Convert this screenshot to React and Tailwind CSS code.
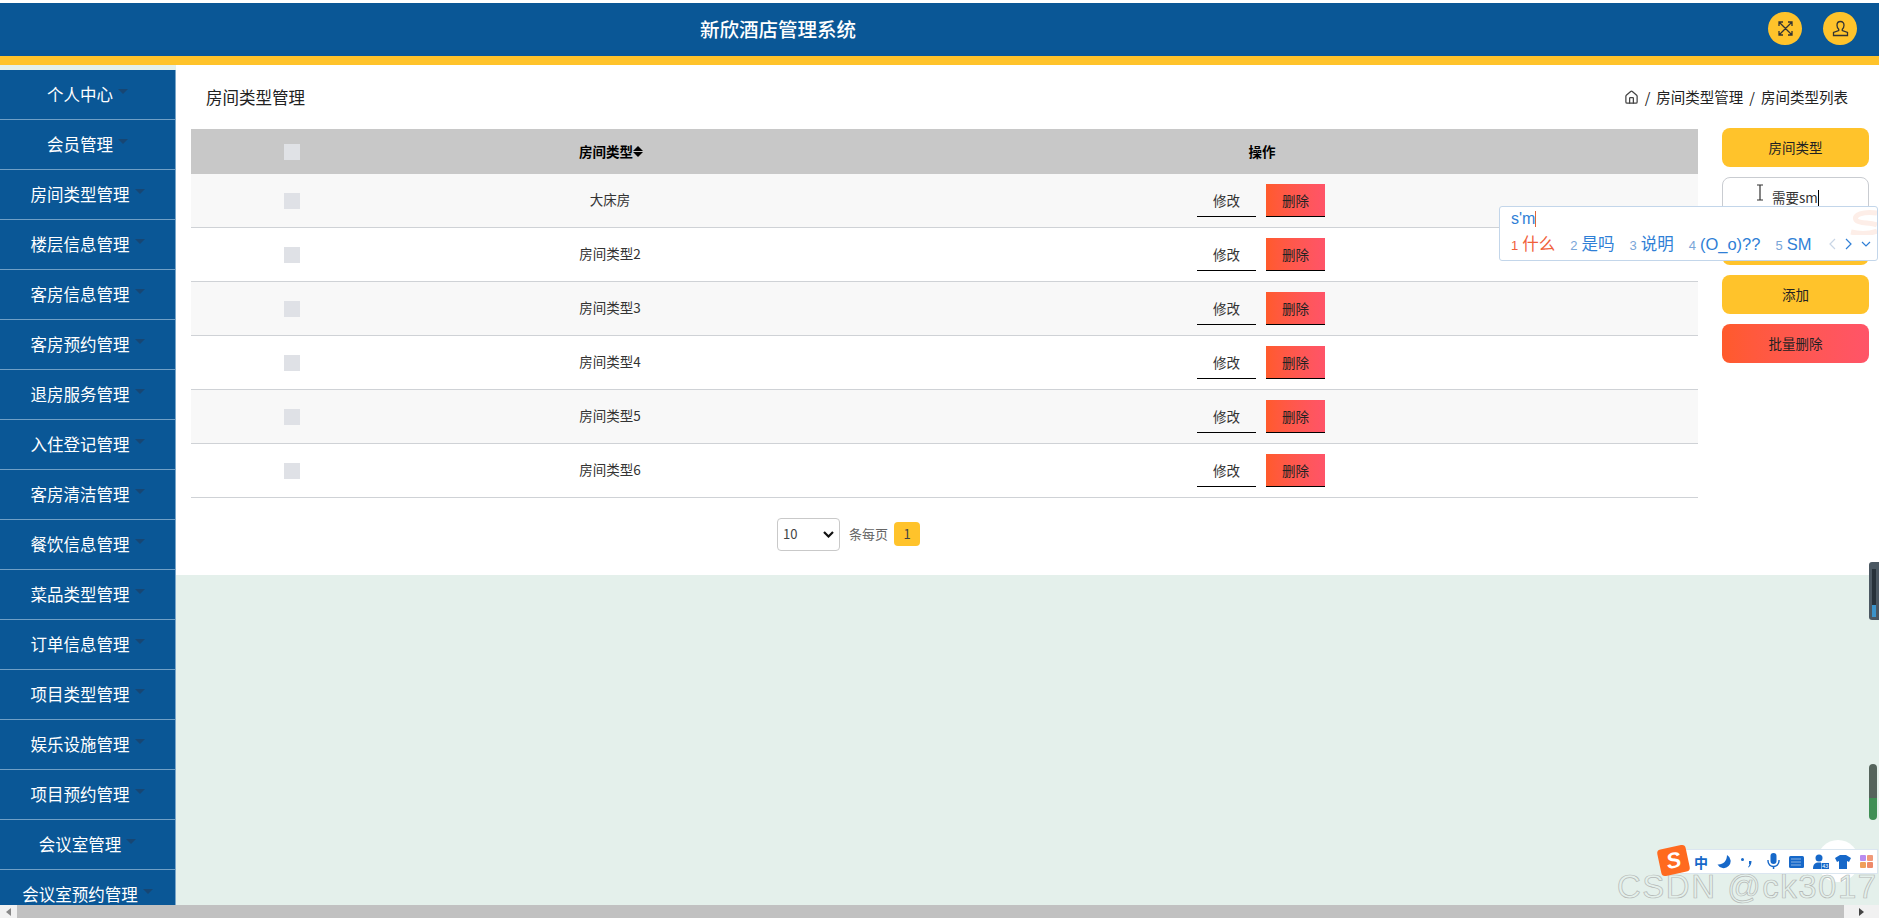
import { Home } from "lucide-react";

const font = "font-['Noto_Sans_CJK_SC','Liberation_Sans',sans-serif]";

const menus = [
  "个人中心",
  "会员管理",
  "房间类型管理",
  "楼层信息管理",
  "客房信息管理",
  "客房预约管理",
  "退房服务管理",
  "入住登记管理",
  "客房清洁管理",
  "餐饮信息管理",
  "菜品类型管理",
  "订单信息管理",
  "项目类型管理",
  "娱乐设施管理",
  "项目预约管理",
  "会议室管理",
  "会议室预约管理",
];

const rows = ["大床房", "房间类型2", "房间类型3", "房间类型4", "房间类型5", "房间类型6"];

function Sidebar() {
  return (
    <aside className="w-[176px] shrink-0 pt-[5px] bg-[#e4f0eb]">
      <ul className="bg-[#0a5796] border-r border-[#7ba6c9]">
        {menus.map((m) => (
          <li
            key={m}
            className="h-[50px] flex items-center justify-center gap-[5px] border-b border-[#6f9fc6] text-white text-[16.5px]"
          >
            <span>{m}</span>
            <span className="w-0 h-0 shrink-0 border-x-[5px] border-x-transparent border-t-[5px] border-t-[#174673] -mt-[6px]" />
          </li>
        ))}
      </ul>
    </aside>
  );
}

function RoomTable() {
  return (
    <div className="w-[1507px]">
      <div className="h-[45px] bg-[#c8c8c8] flex items-center text-[13.5px] font-bold text-black">
        <div className="w-[109px] flex justify-end">
          <span className="w-4 h-4 bg-[#e0e2e6]" />
        </div>
        <div className="w-[620px] flex items-center justify-center pl-[2px]">
          房间类型
          <span className="flex flex-col gap-[1px]">
            <span className="w-0 h-0 border-x-[5px] border-x-transparent border-b-[5px] border-b-black" />
            <span className="w-0 h-0 border-x-[5px] border-x-transparent border-t-[5px] border-t-black" />
          </span>
        </div>
        <div className="flex-1 text-center pr-[94px]">操作</div>
      </div>
      {rows.map((r, i) => (
        <div
          key={r}
          className={`h-[54px] flex items-center border-b border-[#cfd2d6] text-[13.5px] text-[#333] ${
            i % 2 === 0 ? "bg-[#f8f8f8]" : "bg-white"
          }`}
        >
          <div className="w-[109px] flex justify-end">
            <span className="w-4 h-4 bg-[#dfe1e6]" />
          </div>
          <div className="w-[620px] text-center pb-[2px]">{r}</div>
          <div className="flex-1 flex justify-center gap-[10px] pr-[96px]">
            <button className="w-[59px] h-[33px] bg-transparent border-b border-black text-[#333]">修改</button>
            <button className="w-[59px] h-[33px] bg-gradient-to-r from-[#ff5a2b] to-[#ff5468] border-b border-black text-[#222]">
              删除
            </button>
          </div>
        </div>
      ))}
      <div className="h-[72px] flex items-center justify-center gap-[9px] pr-[192px] text-[13px]">
        <div className="w-[63px] h-[33px] border border-[#c9c9c9] rounded-[4px] bg-white flex items-center justify-between px-[5px] text-[#444]">
          10
          <svg width="11" height="7" viewBox="0 0 11 7" fill="none" stroke="#111" strokeWidth="2.2">
            <path d="M1 1l4.500 4.500L10 1" />
          </svg>
        </div>
        <span className="text-[#666]">条每页</span>
        <span className="w-[26px] h-[24px] -ml-[3px] rounded-[4px] bg-[#ffc32b] flex items-center justify-center text-[#444]">1</span>
      </div>
    </div>
  );
}

function ActionColumn() {
  const btn = "h-[39px] rounded-[8px] flex items-center justify-center text-[13.5px] text-[#222]";
  return (
    <div className="w-[147px] ml-[24px] flex flex-col gap-[10px] -mt-[1px]">
      <div className={`${btn} bg-[#ffc32b]`}>房间类型</div>
      <div className="relative h-[39px] rounded-[8px] border border-[#c9ccd1] bg-white flex items-center pl-[49px] pt-[2px] text-[13.5px] text-[#333]">
        <span>需要sm</span>
        <span className="w-px h-[16px] bg-black" />
        <svg className="absolute left-[33px] top-[6px]" width="8" height="17" viewBox="0 0 8 17" fill="none" stroke="#333" strokeWidth="1.200">
          <path d="M1 1h6M4 1v15M1 16h6" />
        </svg>
      </div>
      <div className={`${btn} bg-[#ffc32b]`}>查询</div>
      <div className={`${btn} bg-[#ffc32b]`}>添加</div>
      <div className={`${btn} bg-gradient-to-r from-[#ff5a2b] to-[#ff5468]`}>批量删除</div>
    </div>
  );
}

function ImePopup() {
  const cands = [
    ["1", "什么"],
    ["2", "是吗"],
    ["3", "说明"],
    ["4", "(O_o)??"],
    ["5", "SM"],
  ];
  return (
    <div className="absolute left-[1499px] top-[206px] w-[379px] h-[55px] bg-white border border-[#c3d6ea] rounded-[3px] pl-[11px] text-[#2f7fd6] overflow-hidden font-['Liberation_Sans','Noto_Sans_CJK_SC',sans-serif]">
      <svg className="absolute right-0 top-0" width="36" height="28" viewBox="0 0 36 28" fill="none" stroke="#fdeee8" strokeWidth="5">
        <path d="M36 6C22 4 12 8 15 13c3 4 14 2 21 5M10 25c8 2 18 2 26-1" />
      </svg>
      <div className="h-[24px] flex items-center text-[16px] leading-none">
        s'm<span className="w-px h-[16px] bg-[#e0653a]" />
      </div>
      <div className="relative flex items-center text-[16.5px] h-[26px] pt-[1px]">
        {cands.map(([n, c], i) => (
          <span key={n} className={`flex items-baseline gap-[4px] mr-[15px] ${i === 0 ? "text-[#f0603a]" : ""}`}>
            <span className={`text-[13px] ${i === 0 ? "" : "text-[#7aa6d8]"}`}>{n}</span>
            {c}
          </span>
        ))}
        <span className="absolute right-[6px] top-[7px] flex items-center gap-[9px]">
          <svg width="7" height="12" viewBox="0 0 7 12" fill="none" stroke="#c9d6e6" strokeWidth="1.200"><path d="M6 1L1 6l5 5" /></svg>
          <svg width="7" height="12" viewBox="0 0 7 12" fill="none" stroke="#2f7fd6" strokeWidth="1.200"><path d="M1 1l5 5-5 5" /></svg>
          <svg width="10" height="7" viewBox="0 0 10 7" fill="none" stroke="#2f7fd6" strokeWidth="1.200"><path d="M1 1l4 4 4-4" /></svg>
        </span>
      </div>
    </div>
  );
}

function SogouBar() {
  return (
    <div className="absolute left-[1680px] top-[849px] w-[198px] h-[25px] bg-white border border-[#dbe6f0] flex items-center pl-[13px] gap-[9px]">
      <div className="absolute -left-[22px] -top-[3px] w-[29px] h-[27px] bg-[#ff6a1f] rounded-[4px] -rotate-12 flex items-center justify-center text-white font-black italic text-[22px] leading-none font-['Liberation_Sans']">
        S
      </div>
      <span className="text-[#1668c9] text-[14px] font-bold leading-none shrink-0">中</span>
      <svg className="shrink-0" width="14" height="14" viewBox="0 0 14 14" fill="#1668c9"><path d="M10 0a7 7 0 1 1-9.500 9.500C6 10 10 6 10 0z" /></svg>
      <svg className="shrink-0" width="12" height="12" viewBox="0 0 12 12" fill="#1668c9"><circle cx="2.500" cy="3.500" r="1.500" /><path d="M9 5h2.500c0 3-1 5-3 6.500l-.5-.6c1-.9 1.400-1.900 1.400-2.900H9z" /></svg>
      <svg className="shrink-0 ml-[6px]" width="13" height="17" viewBox="0 0 13 17" fill="#1668c9"><rect x="3.500" y="0" width="6" height="11" rx="3" /><path d="M1 7v1a5.500 5.500 0 0 0 11 0V7" fill="none" stroke="#1668c9" strokeWidth="1.400" /><rect x="5.800" y="13" width="1.500" height="3" /></svg>
      <svg className="shrink-0" width="15" height="12" viewBox="0 0 15 12"><rect width="15" height="12" rx="1.500" fill="#1668c9" /><path d="M2.500 3h10M2.500 6h10M2.500 9h10" stroke="#fff" strokeWidth="1" strokeDasharray="1 1" /></svg>
      <svg className="shrink-0" width="16" height="16" viewBox="0 0 16 16" fill="#1668c9"><circle cx="6" cy="4" r="3.500" /><path d="M0 15c0-5 2-6.500 6-6.500h2V15z" /><rect x="8.500" y="9" width="7.500" height="6" /><text x="9.300" y="14" fontSize="5.500" fill="#fff">43</text></svg>
      <svg className="shrink-0 -ml-[3px]" width="16" height="14" viewBox="0 0 16 14" fill="#1668c9"><path d="M5 0h6l5 3-2 4-2-1v8H4V6L2 7 0 3z" /></svg>
      <span className="grid grid-cols-2 gap-[1px] shrink-0">
        <span className="w-[6px] h-[6px] rounded-[1px] bg-[#b98cf0]" />
        <span className="w-[6px] h-[6px] rounded-[1px] bg-[#f09a7a]" />
        <span className="w-[6px] h-[6px] rounded-[1px] bg-[#f0a05a]" />
        <span className="w-[6px] h-[6px] rounded-[1px] bg-[#ee8a6a]" />
      </span>
    </div>
  );
}

export default function App() {
  return (
    <div className={`relative h-[918px] overflow-hidden bg-white flex flex-col ${font}`}>
      <header className="mt-[3px] h-[53px] shrink-0 bg-[#0a5796] relative flex items-center pl-[700px]">
        <h1 className="text-[19.5px] font-medium text-white -mt-[2px]">新欣酒店管理系统</h1>
        <div className="absolute right-[22px] top-[9px] flex gap-[21px]">
          <span className="w-[34px] h-[33px] rounded-full bg-[#ffc32b] flex items-center justify-center">
            <svg width="17" height="17" viewBox="0 0 17 17" fill="none" stroke="#333" strokeWidth="1.300">
              <path d="M2 2l13 13M15 2L2 15M2 6V2h4M11 2h4v4M15 11v4h-4M6 15H2v-4" />
            </svg>
          </span>
          <span className="w-[34px] h-[33px] rounded-full bg-[#ffc32b] flex items-center justify-center">
            <svg width="17" height="17" viewBox="0 0 17 17" fill="none" stroke="#333" strokeWidth="1.300">
              <path d="M8.500 1.500c-2.400 0-3.500 1.800-3.500 3.800 0 1.700.7 3 1.700 3.900v1.300L1.500 12.500v3h14v-3l-5.200-2v-1.300c1-.9 1.700-2.200 1.700-3.900 0-2-1.100-3.800-3.500-3.800z" />
            </svg>
          </span>
        </div>
      </header>
      <div className="h-[9px] shrink-0 bg-[#ffc32b]" />
      <div className="flex flex-1 min-h-0 overflow-hidden">
        <Sidebar />
        <main className="flex-1 bg-[#e4f0eb]">
          <div className="bg-white h-[510px] pl-[15px]">
            <div className="h-[64px] flex items-center justify-between pl-[15px] pr-[31px]">
              <span className="pt-[1px] text-[16.5px] text-[#222]">房间类型管理</span>
              <span className="flex items-center gap-[6px] text-[14.5px] text-[#222]">
                <Home size={15} className="text-[#444]" />
                <span>/</span>
                <span>房间类型管理</span>
                <span>/</span>
                <span>房间类型列表</span>
              </span>
            </div>
            <div className="flex">
              <RoomTable />
              <ActionColumn />
            </div>
          </div>
        </main>
      </div>
      {/* window scrollbar */}
      <div className="h-[13px] shrink-0 bg-[#f1f1f1] flex items-center">
        <span className="w-[17px] flex justify-center">
          <span className="w-0 h-0 border-y-[4px] border-y-transparent border-r-[5px] border-r-[#888]" />
        </span>
        <span className="flex-1 h-full bg-[#c1c1c1]" />
        <span className="w-[35px] flex justify-center">
          <span className="w-0 h-0 border-y-[4px] border-y-transparent border-l-[5px] border-l-[#444]" />
        </span>
      </div>

      <ImePopup />

      {/* desktop widgets over the page edge */}
      <span className="absolute left-[1869px] top-[562px] w-[10px] h-[58px] rounded-l-[3px] bg-[#4b5862] flex flex-col justify-end items-center pb-[3px]">
        <span className="w-[4px] h-[48px] bg-gradient-to-b from-[#27323a] from-75% to-[#3b93c9] to-75%" />
      </span>
      <span className="absolute left-[1869px] top-[764px] w-[8px] h-[56px] rounded-[4px] bg-gradient-to-b from-[#55645c] from-60% to-[#3f8f55] to-60%" />
      <span className="absolute left-[1817px] top-[840px] w-[42px] h-[42px] rounded-full bg-white" />
      <span className="absolute left-[1617px] top-[870px] text-[33px] tracking-[1.500px] text-[#e4f0eb] font-['Liberation_Sans'] leading-none [-webkit-text-stroke:0.7px_#b4b8b6]">
        CSDN @ck3017
      </span>
      <SogouBar />
    </div>
  );
}
